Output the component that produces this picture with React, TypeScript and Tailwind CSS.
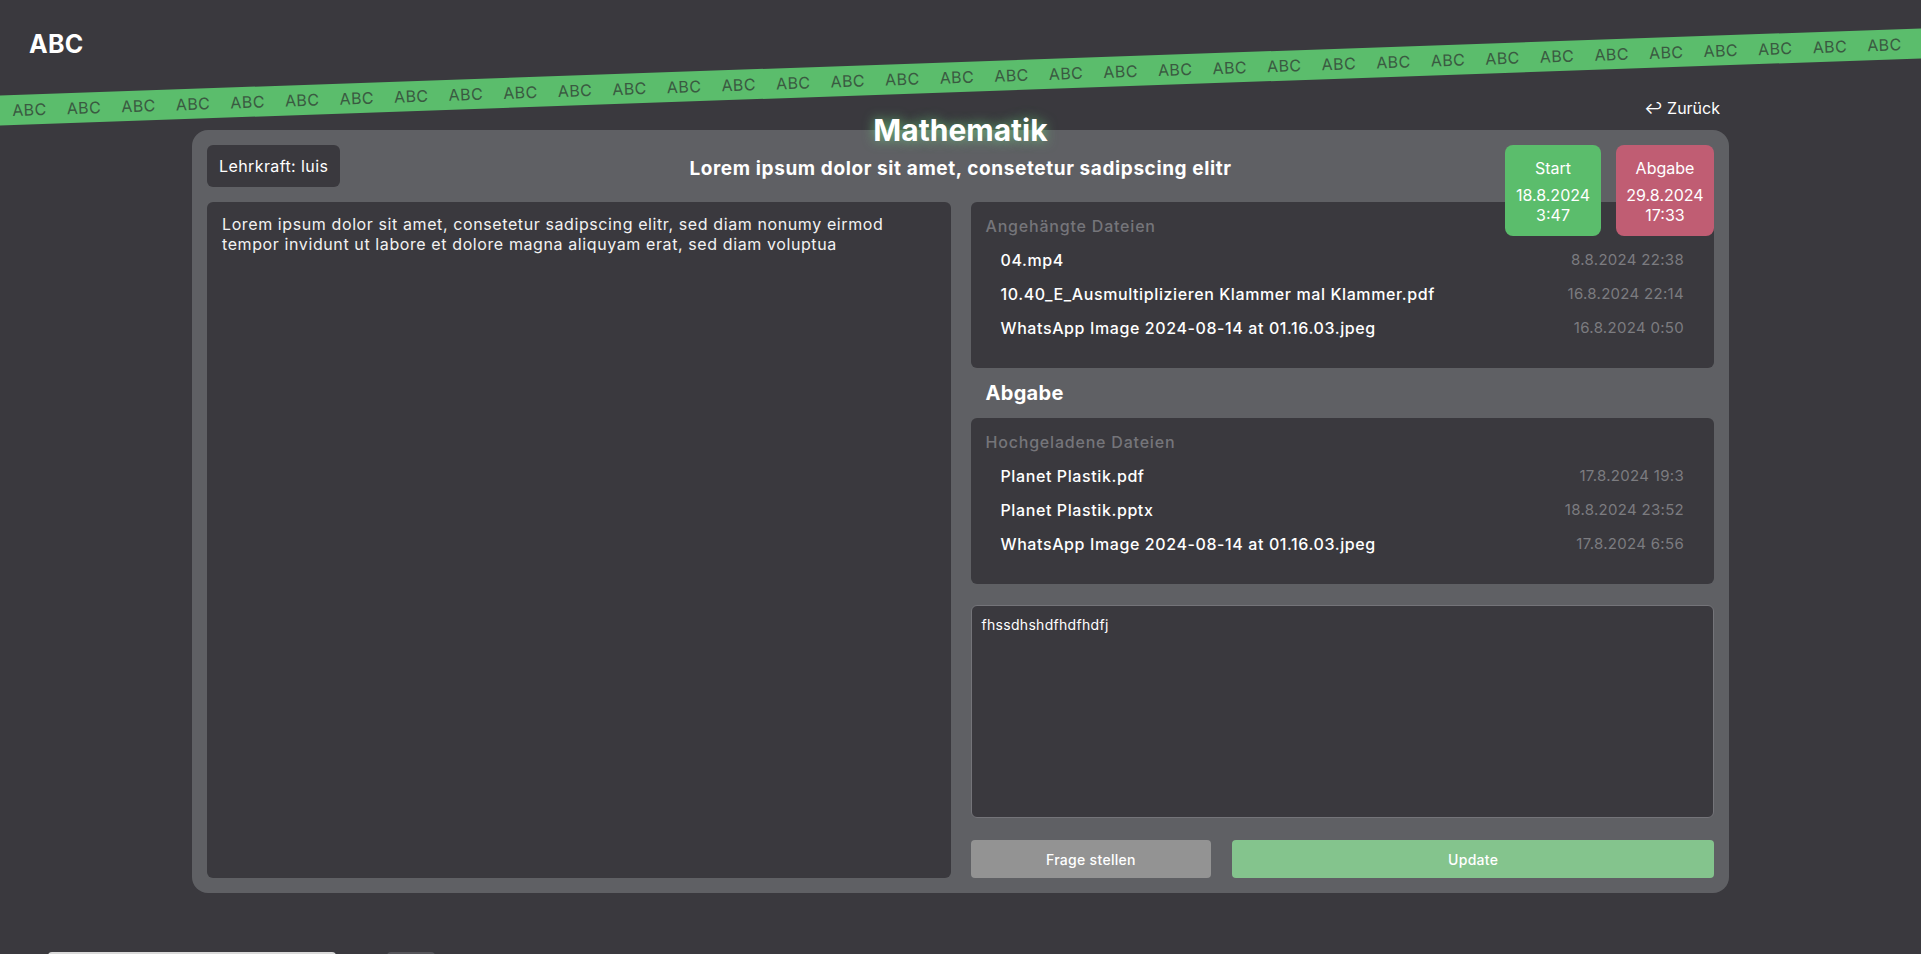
import React from 'react';

const font = { fontFamily: 'Inter, "Noto Sans", sans-serif' };

const attached = [
    { name: '04.mp4', date: '8.8.2024 22:38' },
    { name: '10.40_E_Ausmultiplizieren Klammer mal Klammer.pdf', date: '16.8.2024 22:14' },
    { name: 'WhatsApp Image 2024-08-14 at 01.16.03.jpeg', date: '16.8.2024 0:50' },
];

const uploaded = [
    { name: 'Planet Plastik.pdf', date: '17.8.2024 19:3' },
    { name: 'Planet Plastik.pptx', date: '18.8.2024 23:52' },
    { name: 'WhatsApp Image 2024-08-14 at 01.16.03.jpeg', date: '17.8.2024 6:56' },
];

const FilePanel = ({ title, files }: { title: string; files: { name: string; date: string }[] }) => (
    <div className="bg-[#3a393e] rounded-md px-[15px] pt-[13px] pb-[23px]">
        <div className="text-[16px] leading-[22px] font-medium tracking-[0.8px] text-[#75757a]">{title}</div>
        <ul className="mt-[6px] px-[15px]">
            {files.map((f) => (
                <li key={f.name + f.date} className="h-[34px] flex items-center justify-between">
                    <span className="text-[16px] font-medium tracking-[0.6px] text-white">{f.name}</span>
                    <span className="text-[15px] tracking-[0.3px] text-[#7c7c80]">{f.date}</span>
                </li>
            ))}
        </ul>
    </div>
);

export default function App() {
    return (
        <div className="relative min-h-screen overflow-hidden bg-[#3a393e] text-white" style={font}>
            {/* diagonal banner */}
            <div className="absolute left-[-90px] top-[62px] w-[2100px] h-[30px] bg-[#5bbd6c] -rotate-2 flex items-center pl-[47px] overflow-hidden">
                {Array.from({ length: 40 }).map((_, i) => (
                    <span key={i} className="w-[54.6px] shrink-0 text-[16px] tracking-[0.4px] text-[#3a5a41]">ABC</span>
                ))}
            </div>

            <header className="relative px-[29px] pt-[30px]">
                <div className="text-[25px] leading-[28px] font-bold tracking-[0.3px]">ABC</div>
            </header>

            <main className="relative w-[1537px] mx-auto mt-[39px]">
                <div className="flex justify-end pr-[9px]">
                    <button className="text-[16px] leading-[22px] text-white">↩ Zurück</button>
                </div>

                <div className="relative mt-[11px] bg-[#5f6064] rounded-2xl p-[15px]">
                    <h1 className="absolute left-1/2 -translate-x-1/2 top-[-19px] text-[30px] leading-[38px] font-bold text-white [text-shadow:0_0_12px_rgba(110,220,130,0.75)]">
                        Mathematik
                    </h1>

                    <div className="absolute top-[15px] right-[15px] flex gap-[15px] z-10">
                        <div className="w-[96px] h-[91px] rounded-lg bg-[#5bbd6c] flex flex-col items-center pt-3 text-[16px]">
                            <span className="leading-[22px]">Start</span>
                            <span className="mt-[6px] leading-[20px] text-center">18.8.2024<br />3:47</span>
                        </div>
                        <div className="w-[98px] h-[91px] rounded-lg bg-[#c05d73] flex flex-col items-center pt-3 text-[16px]">
                            <span className="leading-[22px]">Abgabe</span>
                            <span className="mt-[6px] leading-[20px] text-center">29.8.2024<br />17:33</span>
                        </div>
                    </div>

                    <div className="grid grid-cols-[1fr_auto_1fr] items-center h-[41px]">
                        <div>
                            <span className="inline-flex items-center h-[42px] px-3 rounded-md bg-[#3a393e] text-[16px] tracking-[0.4px]">Lehrkraft: luis</span>
                        </div>
                        <h2 className="pt-[7px] text-[19px] font-bold tracking-[0.6px]">Lorem ipsum dolor sit amet, consetetur sadipscing elitr</h2>
                        <div />
                    </div>

                    <div className="mt-4 grid grid-cols-2 gap-5">
                        <div className="bg-[#3a393e] rounded-md px-[15px] py-[12px] text-[16px] leading-[20px] tracking-[0.6px] text-[#f2f2f2]">
                            Lorem ipsum dolor sit amet, consetetur sadipscing elitr, sed diam nonumy eirmod tempor invidunt ut labore et dolore magna aliquyam erat, sed diam voluptua
                        </div>

                        <div className="flex flex-col">
                            <FilePanel title="Angehängte Dateien" files={attached} />
                            <h3 className="pl-[15px] my-3 text-[20px] leading-[26px] font-bold tracking-[0.3px]">Abgabe</h3>
                            <FilePanel title="Hochgeladene Dateien" files={uploaded} />
                            <textarea
                                defaultValue="fhssdhshdfhdfhdfj"
                                className="mt-[21px] h-[213px] resize-none rounded-md border border-[#747479] bg-[#3a393e] px-[10px] py-2 text-[14px] tracking-[0.3px] text-white outline-none"
                            />
                            <div className="mt-[22px] grid grid-cols-[1fr_2fr] gap-[21px]">
                                <button className="h-[38px] rounded bg-[#939393] text-[14px] font-medium tracking-[0.3px] text-white">Frage stellen</button>
                                <button className="h-[38px] rounded bg-[#84c48d] text-[14px] font-medium tracking-[0.3px] text-white">Update</button>
                            </div>
                        </div>
                    </div>
                </div>

                <div className="h-[59px]" />
            </main>

            <footer className="relative flex h-[60px] pl-[48px] gap-[51px]">
                <div className="w-[288px] h-full bg-[#d9d9d9] rounded-t-sm" />
                <div className="w-[48px] h-full bg-[#55555a] rounded-t-sm" />
            </footer>
        </div>
    );
}
